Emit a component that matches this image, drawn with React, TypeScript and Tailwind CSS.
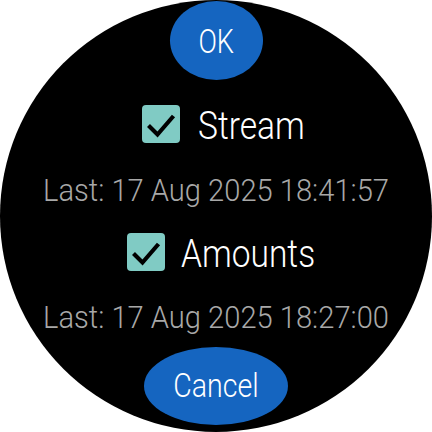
const font = { fontFamily: "Roboto, 'Liberation Sans', sans-serif" };

function CheckBox() {
    return (
        <div className="w-[38px] h-[38px] rounded-[4px] bg-[#80cbc4] shrink-0">
            <svg width="38" height="38" viewBox="0 0 38 38">
                <path d="M6.5 20.5 L15.5 29.5 L31.5 11" fill="none" stroke="#000" strokeWidth="4.2" />
            </svg>
        </div>
    );
}

function SyncRow({ label, width, gap }: { label: string; width: number; gap: string }) {
    return (
        <div className={`flex items-center justify-center h-[38px] pl-3 ${gap}`}>
            <CheckBox />
            <div className="h-[38px] flex items-center" style={{ width }}>
                <span className="inline-block whitespace-nowrap text-[39px] font-light leading-[38px] text-white origin-left scale-x-[0.86] translate-y-[2px]">
                    {label}
                </span>
            </div>
        </div>
    );
}

function LastLine({ text, mt }: { text: string; mt: string }) {
    return (
        <div className={`h-[36px] flex justify-center ${mt}`}>
            <span className="inline-block whitespace-nowrap text-[32px] font-light leading-[36px] text-[#a8a8a8] scale-x-[0.91]">
                {text}
            </span>
        </div>
    );
}

export default function App() {
    return (
        <div className="w-[432px] h-[432px] bg-white" style={font}>
            <div className="w-[432px] h-[432px] rounded-full bg-black overflow-hidden flex flex-col items-center">
                <button className="mt-px w-[93px] h-[79px] shrink-0 rounded-[50%] bg-[#1565c0] flex items-center justify-center">
                    <span className="inline-block text-[34px] font-light leading-none text-white scale-x-[0.8]">OK</span>
                </button>

                <div className="mt-[25px] w-full">
                    <SyncRow label="Stream" width={104} gap="gap-[18px]" />
                </div>

                <LastLine text="Last: 17 Aug 2025 18:41:57" mt="mt-[29px]" />

                <div className="mt-[25px] w-full">
                    <SyncRow label="Amounts" width={137} gap="gap-[16px]" />
                </div>

                <LastLine text="Last: 17 Aug 2025 18:27:00" mt="mt-[28px]" />

                <button className="mt-[12px] w-[144px] h-[78px] shrink-0 rounded-[50%] bg-[#1565c0] flex items-center justify-center">
                    <span className="inline-block text-[34px] font-light leading-none text-white scale-x-[0.84] -translate-y-px">Cancel</span>
                </button>
            </div>
        </div>
    );
}
